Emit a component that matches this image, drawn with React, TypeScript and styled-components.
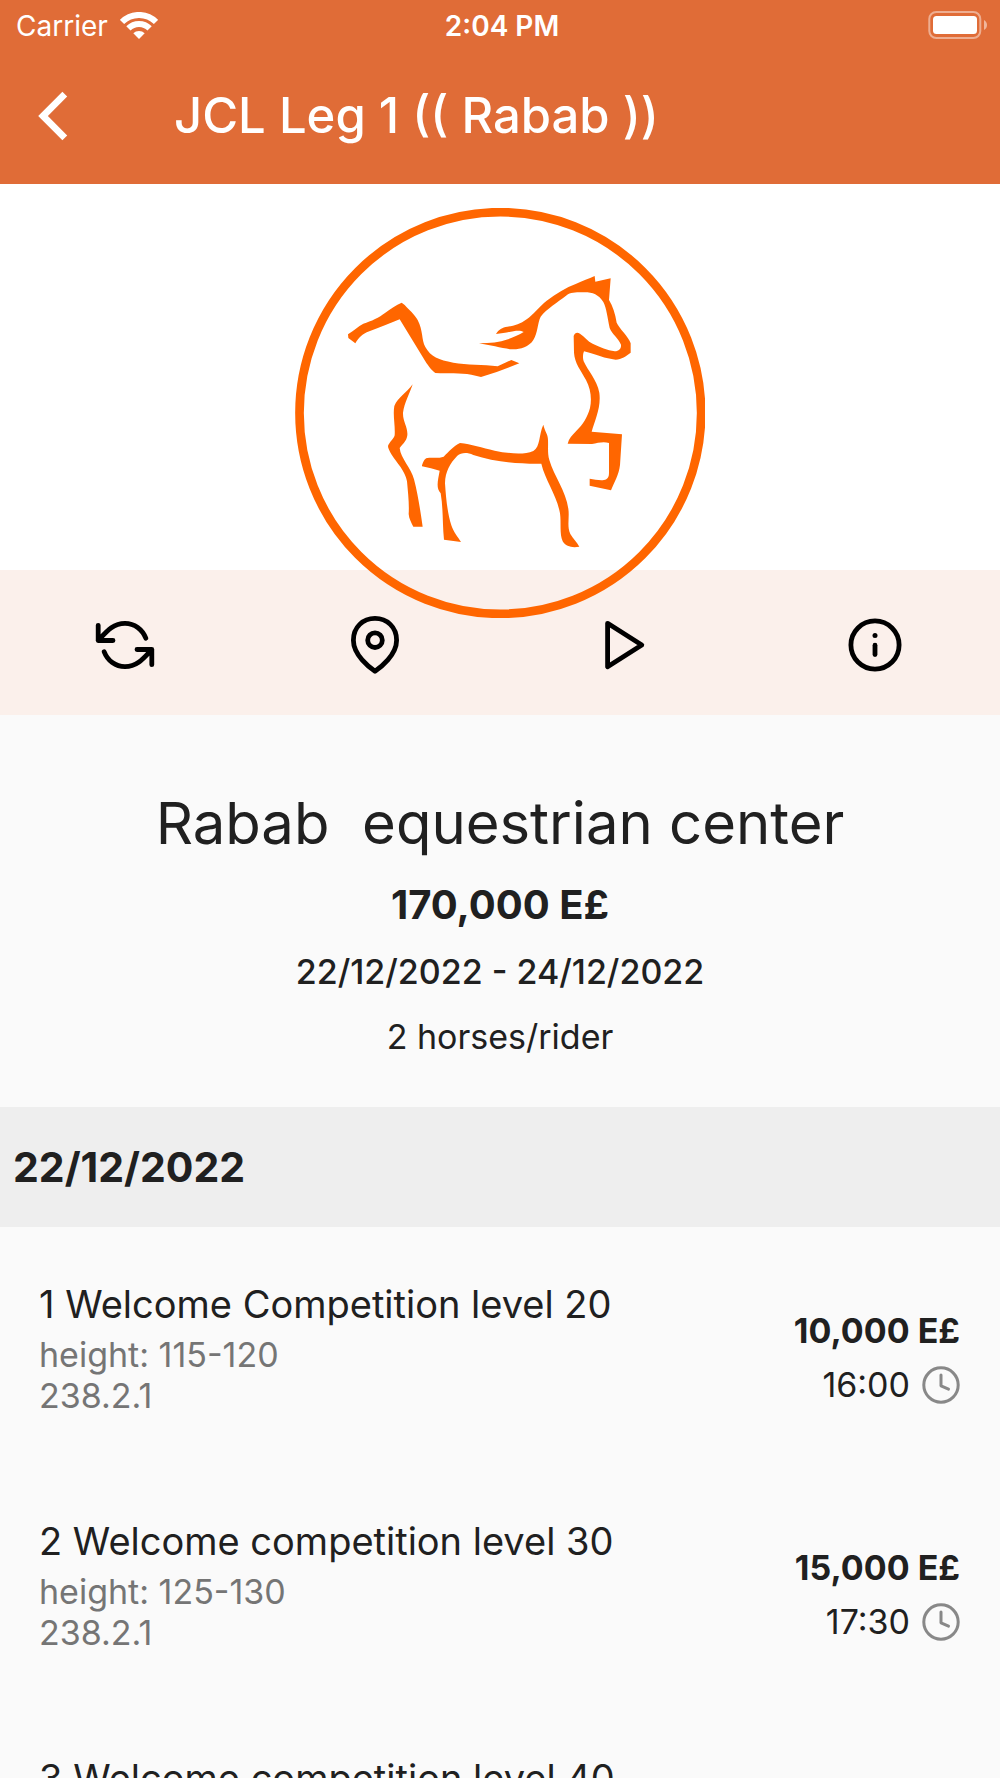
import React from "react";
import styled, { createGlobalStyle } from "styled-components";

const GlobalStyle = createGlobalStyle`
  *, *::before, *::after { box-sizing: border-box; }
  body {
    margin: 0;
    background: #fafafa;
    color: #202020;
    font-family: Inter, "Liberation Sans", sans-serif;
  }
  h1, h2, h3, p, ul { margin: 0; padding: 0; }
`;

const Screen = styled.div`
  display: flex;
  flex-direction: column;
  height: 100vh;
  overflow: hidden;
`;

const Header = styled.header`
  flex: none;
  background: #e06c37;
  color: #ffffff;
`;

const StatusBar = styled.div`
  display: grid;
  grid-template-columns: 1fr auto 1fr;
  align-items: center;
  height: 48px;
  padding: 0 12px 0 16px;
  font-size: 28px;
  line-height: 48px;
`;

const Carrier = styled.span`
  display: flex;
  align-items: center;
  gap: 12px;
  padding-top: 2px;
`;

const Clock = styled.time`
  font-weight: 600;
  padding-top: 2px;
`;

const BatteryIcon = styled.svg`
  justify-self: end;
`;

const NavBar = styled.div`
  display: flex;
  align-items: center;
  height: 136px;
  padding: 0 32px 0 29px;
`;

const BackButton = styled.button`
  display: grid;
  place-items: center;
  width: 48px;
  height: 64px;
  padding: 0;
  border: 0;
  background: none;
  color: inherit;
  cursor: pointer;
`;

const Title = styled.h1`
  margin-left: 97px;
  font-size: 49px;
  line-height: 64px;
  font-weight: 500;
  white-space: nowrap;
`;

const Content = styled.main`
  flex: 1;
  min-height: 0;
  overflow-y: auto;
  scrollbar-width: none;
`;

const Hero = styled.div`
  display: flex;
  justify-content: center;
  padding-top: 24px;
  background: #ffffff;
`;

const Logo = styled.svg`
  position: relative;
  z-index: 1;
  width: 410px;
  height: 410px;
  margin-bottom: -48px;
  pointer-events: none;
`;

const Toolbar = styled.nav`
  display: grid;
  grid-template-columns: repeat(4, 1fr);
  padding: 43px 0 38px;
  background: #fbf0eb;
`;

const ToolButton = styled.button`
  display: grid;
  place-items: center;
  height: 64px;
  padding: 0;
  border: 0;
  background: none;
  color: #000000;
  cursor: pointer;
`;

const Summary = styled.section`
  display: flex;
  flex-direction: column;
  align-items: center;
  padding: 71px 24px 38px;
  text-align: center;
`;

const Venue = styled.h2`
  margin-bottom: 11px;
  font-size: 58px;
  line-height: 74px;
  font-weight: 400;
  white-space: pre-wrap;
`;

const Prize = styled.p`
  font-size: 40px;
  line-height: 68px;
  font-weight: 700;
`;

const SummaryLine = styled.p<{ $weight: number }>`
  font-size: 34px;
  line-height: 65px;
  font-weight: ${(p) => p.$weight};
`;

const DayHeading = styled.h2`
  padding: 0 13px;
  background: #eeeeee;
  font-size: 41px;
  line-height: 120px;
  font-weight: 700;
`;

const ClassList = styled.ul`
  list-style: none;
`;

const ClassRow = styled.li`
  display: flex;
  justify-content: space-between;
  align-items: flex-start;
  padding: 53px 40px 48px 39px;
`;

const ClassName = styled.h3`
  margin-bottom: 6px;
  font-size: 38px;
  line-height: 48px;
  font-weight: 400;
`;

const ClassMeta = styled.p`
  color: #757575;
  font-size: 34px;
  line-height: 41px;
`;

const ClassSide = styled.div`
  display: flex;
  flex-direction: column;
  align-items: flex-end;
  gap: 12px;
  padding-top: 31px;
  font-size: 34px;
  line-height: 40px;
`;

const ClassPrize = styled.p`
  font-weight: 700;
`;

const ClassTime = styled.p`
  display: flex;
  align-items: center;
  gap: 12px;
`;

const LineIcon = ({ children }: { children: React.ReactNode }) => (
  <svg
    width="64"
    height="64"
    viewBox="0 0 64 64"
    fill="none"
    stroke="currentColor"
    strokeWidth="4.8"
    strokeLinecap="round"
    strokeLinejoin="round"
    aria-hidden="true"
  >
    {children}
  </svg>
);

const refreshHalf = "M5.2 12.3V27.5H20M5.2 27.5C14 18 20 10.4 32 10.4C41.5 10.4 49.4 16.4 52.8 25.2";

const tools = [
  {
    label: "Refresh",
    art: (
      <>
        <path d={refreshHalf} />
        <path d={refreshHalf} transform="rotate(180 32 32)" />
      </>
    ),
  },
  {
    label: "Location",
    art: (
      <>
        <path d="M32 58.2C26.5 54.5 10.4 42 10.4 27.2C10.4 14 20 5.4 32 5.4S53.6 14 53.6 27.2C53.6 42 37.5 54.5 32 58.2Z" />
        <circle cx="32" cy="27.2" r="7.3" />
      </>
    ),
  },
  { label: "Start", art: <path d="M14.6 10.3L48.8 32L14.6 53.7Z" /> },
  {
    label: "Information",
    art: (
      <>
        <circle cx="32" cy="32" r="24.1" />
        <path d="M32 32.2V41.6" />
        <circle cx="32" cy="22.4" r="2.5" fill="currentColor" stroke="none" />
      </>
    ),
  },
];

const ClockIcon = () => (
  <svg
    width="38"
    height="44"
    viewBox="0 0 38 44"
    fill="none"
    stroke="#888888"
    strokeWidth="3"
    strokeLinecap="round"
    strokeLinejoin="round"
    aria-hidden="true"
  >
    <circle cx="19" cy="22" r="17.2" />
    <path d="M19 12V22.8L26.5 26.2" />
  </svg>
);

const HorseLogo = () => (
  <Logo viewBox="45 24 1230 1230" role="img" aria-label="Rabab equestrian center">
    <circle cx="661" cy="639" r="602.5" fill="none" stroke="#ff6600" strokeWidth="26" />
    <g fill="#ff6600">
      <path d="M204 403C222 392 234 379 250 371C274 364 298 352 315 339C332 327 348 315 365 308L374 315C386 328 404 344 413 360C430 392 424 420 436 441C452 470 476 480 520 488C560 495 610 493 653 499L694 480L718 490L650 516L603 531L574 524C540 518 505 522 466 519C456 513 444 497 436 484L359 358C330 370 300 382 268 394C246 402 236 414 226 430L205 414Z" />
      <path d="M648 402C656 388 667 382 682 380C704 378 721 372 740 358C760 344 778 319 800 302C830 280 858 263 887 252C908 243 926 236 944 228L946 245L992 235L987 300C998 318 1006 342 1010 368C1018 386 1046 410 1052 430L1052 458C1038 469 1025 478 1007 479C975 476 950 464 912 454C908 462 908 474 911 484C924 513 951 540 958 578C964 622 944 662 935 695L1026 703L1020 795C1017 824 1002 848 993 871L929 857V836C944 838 958 842 972 840C983 838 987 831 987 818V729C972 724 954 728 936 732L863 731C867 716 876 706 888 694C910 672 922 652 930 624C936 596 932 566 918 540C902 510 884 490 882 458L881 408C885 397 892 396 900 401C914 410 923 424 938 431C960 442 982 451 1004 454C1018 453 1024 446 1023 434C1014 414 996 402 989 384C982 352 980 326 970 306C956 284 938 277 914 277C894 277 872 276 860 286C832 308 800 327 782 350C772 370 774 398 760 420C746 442 718 449 696 448C670 446 630 435 597 430C630 430 658 427 684 418C702 410 718 405 731 396C714 386 682 400 648 402Z" />
      <path d="M398 553C389 582 373 608 369 638C368 666 384 680 382 706C380 724 368 732 359 744C362 776 394 804 402 838C414 884 421 932 428 980H400C394 968 387 956 386 942C388 912 384 878 381 844C376 812 350 788 335 764C328 752 324 744 324 738C328 726 341 718 344 706C346 674 338 646 343 618C354 592 380 578 398 553Z" />
      <path d="M426 796C430 786 432 776 442 774C458 772 476 776 491 770C506 756 520 738 540 729C574 732 606 744 644 752C684 760 730 766 760 753C782 739 776 704 790 674C794 694 804 702 804 720C805 740 802 760 808 780C822 828 858 874 865 926C869 952 860 980 871 1002C879 1016 890 1026 898 1040C877 1044 858 1040 848 1024C838 1002 844 970 840 940C830 884 796 842 784 791C716 792 642 786 580 765C560 756 544 758 532 767C510 790 496 814 495 850C498 894 502 938 514 976C521 997 533 1010 543 1026L492 1019C487 972 490 926 482 880C466 864 475 836 479 812C462 808 444 802 426 799Z" />
    </g>
  </Logo>
);

type CompetitionClass = {
  name: string;
  meta?: string[];
  prize?: string;
  time?: string;
};

const classes: CompetitionClass[] = [
  {
    name: "1 Welcome Competition level 20",
    meta: ["height: 115-120", "238.2.1"],
    prize: "10,000 E£",
    time: "16:00",
  },
  {
    name: "2 Welcome competition level 30",
    meta: ["height: 125-130", "238.2.1"],
    prize: "15,000 E£",
    time: "17:30",
  },
  { name: "3 Welcome competition level 40" },
];

export default function App() {
  return (
    <Screen>
      <GlobalStyle />
      <Header>
        <StatusBar>
          <Carrier>
            Carrier
            <svg width="38" height="28" viewBox="0 0 38 28" fill="none" stroke="#fff" strokeWidth="6" aria-hidden="true">
              <path d="M2 10A24 24 0 0 1 36 10" />
              <path d="M8.4 16.4A15 15 0 0 1 29.6 16.4" />
              <path d="M19 27L13.3 21.3A8 8 0 0 1 24.7 21.3Z" fill="#fff" stroke="none" />
            </svg>
          </Carrier>
          <Clock>2:04 PM</Clock>
          <BatteryIcon width="60" height="28" viewBox="0 0 60 28" fill="none" aria-hidden="true">
            <rect x="1.3" y="1" width="51" height="26" rx="7" stroke="#fff" strokeOpacity="0.45" strokeWidth="2" />
            <rect x="5" y="5" width="44" height="18" rx="3.5" fill="#fff" />
            <path d="M56 9C60 11 60 17 56 19Z" fill="#fff" fillOpacity="0.5" />
          </BatteryIcon>
        </StatusBar>
        <NavBar>
          <BackButton aria-label="Back">
            <svg width="32" height="50" viewBox="0 0 32 50" fill="none" stroke="currentColor" strokeWidth="6.8" aria-hidden="true">
              <path d="M27.8 3.2L6 25L27.8 46.8" />
            </svg>
          </BackButton>
          <Title>JCL Leg 1 (( Rabab ))</Title>
        </NavBar>
      </Header>
      <Content>
        <Hero>
          <HorseLogo />
        </Hero>
        <Toolbar aria-label="Show actions">
          {tools.map((tool) => (
            <ToolButton key={tool.label} aria-label={tool.label}>
              <LineIcon>{tool.art}</LineIcon>
            </ToolButton>
          ))}
        </Toolbar>
        <Summary>
          <Venue>{"Rabab  equestrian center"}</Venue>
          <Prize>170,000 E£</Prize>
          <SummaryLine $weight={500}>22/12/2022 - 24/12/2022</SummaryLine>
          <SummaryLine $weight={400}>2 horses/rider</SummaryLine>
        </Summary>
        <DayHeading>22/12/2022</DayHeading>
        <ClassList>
          {classes.map((item) => (
            <ClassRow key={item.name}>
              <div>
                <ClassName>{item.name}</ClassName>
                {item.meta?.map((line) => (
                  <ClassMeta key={line}>{line}</ClassMeta>
                ))}
              </div>
              {item.prize && (
                <ClassSide>
                  <ClassPrize>{item.prize}</ClassPrize>
                  <ClassTime>
                    {item.time}
                    <ClockIcon />
                  </ClassTime>
                </ClassSide>
              )}
            </ClassRow>
          ))}
        </ClassList>
      </Content>
    </Screen>
  );
}
